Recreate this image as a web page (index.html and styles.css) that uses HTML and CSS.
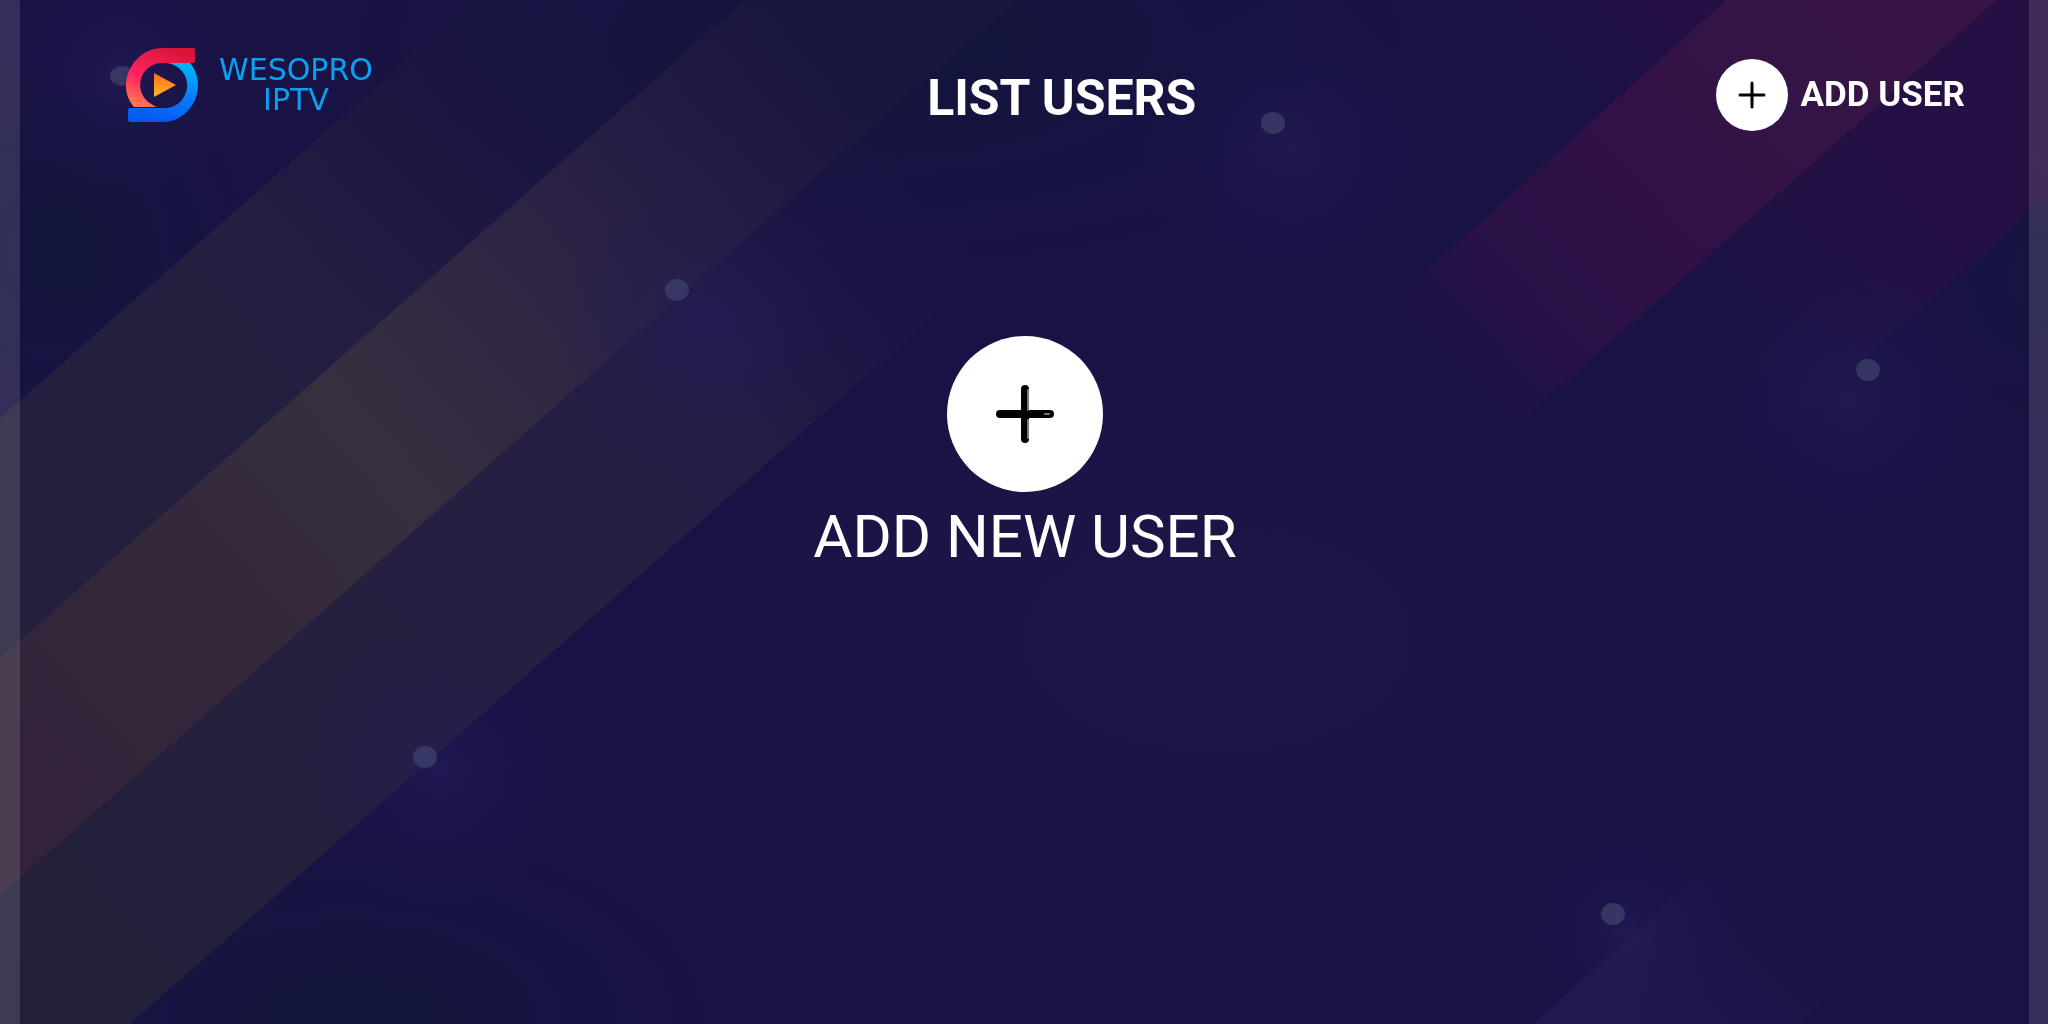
FILE: index.html
```html
<!DOCTYPE html>
<html lang="en">

<head>
    <meta charset="UTF-8">
    <meta name="viewport" content="width=device-width, initial-scale=1.0">
    <title>Wesopro IPTV</title>
    <link rel="stylesheet" href="styles.css">
</head>

<body>
    <svg class="backdrop" viewBox="0 0 2048 1024" preserveAspectRatio="none" aria-hidden="true">
        <defs>
            <linearGradient id="upper" gradientUnits="userSpaceOnUse" x1="0" y1="560" x2="600" y2="0">
                <stop offset="0" stop-color="#241f3c"/>
                <stop offset=".5" stop-color="#231f40"/>
                <stop offset="1" stop-color="#1a1740" stop-opacity="0"/>
            </linearGradient>
            <linearGradient id="lower" gradientUnits="userSpaceOnUse" x1="60" y1="1000" x2="1000" y2="180">
                <stop offset="0" stop-color="#222039"/>
                <stop offset=".5" stop-color="#261f42"/>
                <stop offset=".7" stop-color="#251e44"/>
                <stop offset=".95" stop-color="#1d1846" stop-opacity="0"/>
            </linearGradient>
            <linearGradient id="middle" gradientUnits="userSpaceOnUse" x1="0" y1="790" x2="860" y2="40">
                <stop offset="0" stop-color="#32233a"/>
                <stop offset=".22" stop-color="#33273a"/>
                <stop offset=".45" stop-color="#372f40"/>
                <stop offset=".72" stop-color="#2b2145"/>
                <stop offset="1" stop-color="#211a40" stop-opacity=".3"/>
            </linearGradient>
            <linearGradient id="pink" gradientUnits="userSpaceOnUse" x1="1861" y1="0" x2="1383" y2="430">
                <stop offset="0" stop-color="#361545"/>
                <stop offset=".4" stop-color="#321147"/>
                <stop offset=".7" stop-color="#281245"/>
                <stop offset="1" stop-color="#1b1346" stop-opacity="0"/>
            </linearGradient>
            <linearGradient id="plum" gradientUnits="userSpaceOnUse" x1="2048" y1="60" x2="1640" y2="440">
                <stop offset="0" stop-color="#270f43"/>
                <stop offset=".5" stop-color="#221143"/>
                <stop offset="1" stop-color="#1b1346" stop-opacity="0"/>
            </linearGradient>
            <linearGradient id="faint" gradientUnits="userSpaceOnUse" x1="1650" y1="0" x2="1480" y2="150">
                <stop offset="0" stop-color="#230f43"/>
                <stop offset="1" stop-color="#1b1346" stop-opacity="0"/>
            </linearGradient>
            <linearGradient id="corner" gradientUnits="userSpaceOnUse" x1="1600" y1="1000" x2="1760" y2="850">
                <stop offset="0" stop-color="#20194e"/>
                <stop offset="1" stop-color="#20194e" stop-opacity="0"/>
            </linearGradient>
            <radialGradient id="glow">
                <stop offset="0" stop-color="#261e60" stop-opacity=".5"/>
                <stop offset="1" stop-color="#1e1952" stop-opacity="0"/>
            </radialGradient>
            <radialGradient id="dusk">
                <stop offset="0" stop-color="#11163a" stop-opacity=".85"/>
                <stop offset="1" stop-color="#11163a" stop-opacity="0"/>
            </radialGradient>
            <radialGradient id="center">
                <stop offset="0" stop-color="#1e1547"/>
                <stop offset=".7" stop-color="#1c1446"/>
                <stop offset="1" stop-color="#191244" stop-opacity="0"/>
            </radialGradient>
        </defs>
        <rect width="2048" height="1024" fill="#191244"/>
        <ellipse cx="1220" cy="640" rx="560" ry="330" fill="url(#center)"/>
        <ellipse cx="60" cy="250" rx="200" ry="200" fill="url(#dusk)"/>
        <ellipse cx="880" cy="40" rx="560" ry="240" fill="url(#dusk)"/>
        <ellipse cx="350" cy="1020" rx="380" ry="200" fill="url(#dusk)"/>
        <ellipse cx="2048" cy="280" rx="150" ry="150" fill="url(#dusk)" opacity=".6"/>

        <path d="M0 418 475 0H745L0 658z" fill="url(#upper)"/>
        <path d="M0 896 1016 0H1293L130 1024H0z" fill="url(#lower)"/>
        <path d="M0 658 745 0H1016L0 896z" fill="url(#middle)"/>
        <path d="M1448 0H1726L1337 353H1048z" fill="url(#faint)"/>
        <path d="M1726 0H1997L1429 503H1171z" fill="url(#pink)"/>
        <path d="M1997 0H2048V196L1700 503H1429z" fill="url(#plum)"/>
        <path d="M1533 1024 1800 784H2048V810L1800 1024z" fill="url(#corner)"/>

        <g fill="url(#glow)">
            <circle cx="122" cy="76" r="120"/>
            <circle cx="700" cy="330" r="150"/>
            <circle cx="1290" cy="150" r="150"/>
            <circle cx="1850" cy="400" r="150"/>
            <circle cx="440" cy="770" r="140"/>
            <circle cx="1625" cy="930" r="110"/>
        </g>

        <g fill="#3a3a66" opacity=".9">
            <ellipse cx="122" cy="76" rx="12" ry="10"/>
            <ellipse cx="677" cy="290" rx="12" ry="11"/>
            <ellipse cx="1273" cy="123" rx="12" ry="11"/>
            <ellipse cx="1868" cy="370" rx="12" ry="11"/>
            <ellipse cx="425" cy="757" rx="12" ry="11"/>
            <ellipse cx="1613" cy="914" rx="12" ry="11"/>
        </g>

        <g fill="#fff" opacity=".12">
            <rect width="20" height="1024"/>
            <rect x="2029" width="19" height="1024"/>
        </g>
    </svg>

    <header class="topbar">
        <a class="logo" href="#">
            <svg class="logo-mark" viewBox="0 0 76 78" aria-hidden="true">
                <defs>
                    <linearGradient id="red" x1=".7" y1="0" x2=".2" y2="1">
                        <stop offset="0" stop-color="#d91438"/>
                        <stop offset=".6" stop-color="#ff2560"/>
                        <stop offset="1" stop-color="#ff7a50"/>
                    </linearGradient>
                    <linearGradient id="blue" x1=".6" y1="0" x2=".4" y2="1">
                        <stop offset="0" stop-color="#00b4f5"/>
                        <stop offset=".5" stop-color="#0a7dff"/>
                        <stop offset="1" stop-color="#0557f0"/>
                    </linearGradient>
                    <linearGradient id="play" x1="0" y1="0" x2="0" y2="1">
                        <stop offset="0" stop-color="#ff6a1a"/>
                        <stop offset="1" stop-color="#ffb81f"/>
                    </linearGradient>
                </defs>
                <path d="M43 17H66C71 23 74 31 74 39C74 60 57 76 39 76H6Q4 76 4 74V64Q4 62 6 62H38A22 22 0 0 0 43 17z" fill="url(#blue)"/>
                <path d="M38 2H69Q71 2 71 4V15Q71 17 69 17H38A22 22 0 0 0 29 59Q31 61 34 61H10C5 55 2 48 2 40C2 19 19 2 38 2z" fill="url(#red)"/>
                <path d="M30 27 52 39 30 51z" fill="url(#play)"/>
            </svg>
            <span class="logo-text">WESOPRO<br>IPTV</span>
        </a>
        <h1 class="title">LIST USERS</h1>
        <button class="add-user" type="button">
            <svg class="plus" viewBox="0 0 72 72" aria-hidden="true">
                <circle cx="36" cy="36" r="36" fill="#fff"/>
                <path d="M36 24V48M24 36H48" stroke-width="3"/>
            </svg>
            <span>ADD USER</span>
        </button>
    </header>

    <main class="users">
        <button class="new-user" type="button">
            <svg class="plus plus-large" viewBox="0 0 156 156" aria-hidden="true">
                <circle cx="78" cy="78" r="78" fill="#fff"/>
                <path d="M78 53V103M53 78H103" stroke-width="8"/>
                <path class="shine" d="M81 54V74M81 84V102M98 78H102" stroke-width="2"/>
            </svg>
            <span>ADD NEW USER</span>
        </button>
    </main>
</body>

</html>
```
FILE: styles.css
```css
* {
    margin: 0;
    padding: 0;
    box-sizing: border-box;
}

html {
    height: 100%;
}

body {
    min-height: 100%;
    font-family: Roboto, "Liberation Sans", sans-serif;
    color: #fff;
    background-color: #191244;
}

button {
    border: 0;
    background: none;
    font: inherit;
    color: inherit;
    cursor: pointer;
}

/* stripes and dots behind the whole screen */
.backdrop {
    position: fixed;
    left: 0;
    top: 0;
    width: 100%;
    height: 100%;
    z-index: -1;
}

.topbar {
    display: flex;
    justify-content: space-between;
    align-items: flex-start;
    padding: 46px 83px 0 124px;
}

.logo {
    display: flex;
    width: 284px;
    color: #0ba0ee;
    text-decoration: none;
}

.logo-mark {
    width: 76px;
    height: 78px;
    flex: none;
}

.logo-text {
    width: 192px;
    padding-top: 9px;
    font-family: "DejaVu Sans", sans-serif;
    font-size: 30px;
    line-height: 30px;
    text-align: center;
}

.title {
    padding-top: 20px;
    font-size: 50px;
    font-weight: 700;
    line-height: 64px;
}

.add-user {
    display: flex;
    align-items: center;
    gap: 13px;
    padding-top: 13px;
    font-size: 35px;
    font-weight: 700;
    line-height: 72px;
}

.plus {
    width: 72px;
    height: 72px;
    flex: none;
    fill: none;
    stroke: #000;
    stroke-linecap: round;
}

.plus circle {
    stroke: none;
}

.plus .shine {
    stroke: #777;
}

.plus-large {
    width: 156px;
    height: 156px;
}

.users {
    display: flex;
    justify-content: center;
    padding: 205px 0 0 2px;
}

.new-user {
    display: flex;
    flex-direction: column;
    align-items: center;
    gap: 9px;
    font-size: 60px;
    line-height: 72px;
}
```
